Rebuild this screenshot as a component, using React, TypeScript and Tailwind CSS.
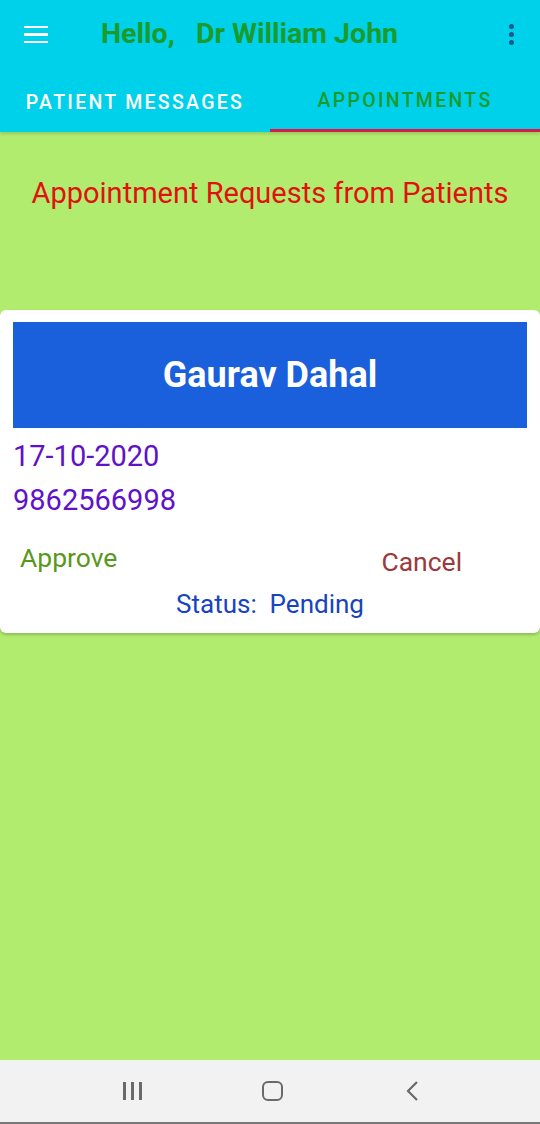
import React from "react";

export default function App() {
  return (
    <div className="w-[540px] h-[1124px] flex flex-col bg-[#b2ec6f] overflow-hidden" style={{ fontFamily: "Roboto, 'Noto Sans', sans-serif" }}>
      <div className="bg-[#00d1ea] shadow-[0_2px_3px_rgba(0,0,0,0.15)] z-10">
        <div className="h-[69px] flex items-center">
          <div className="w-[24px] ml-[24px] flex flex-col gap-[5px]">
            <div className="h-[2.5px] bg-white" />
            <div className="h-[2.5px] bg-white" />
            <div className="h-[2.5px] bg-white" />
          </div>
          <div className="ml-[53px] text-[28.5px] font-bold text-[#1a9b2b] whitespace-pre leading-none">Hello,   Dr William John</div>
          <div className="ml-auto mr-[26px] flex flex-col gap-[3px]">
            <div className="w-[5px] h-[5px] rounded-full bg-[#1d5a8a]" />
            <div className="w-[5px] h-[5px] rounded-full bg-[#1d5a8a]" />
            <div className="w-[5px] h-[5px] rounded-full bg-[#1d5a8a]" />
          </div>
        </div>
        <div className="h-[63px] flex">
          <div className="flex-1 flex items-center justify-center text-white text-[19.5px] tracking-[2.3px] font-medium pt-[4px]">PATIENT MESSAGES</div>
          <div className="flex-1 flex flex-col">
            <div className="flex-1 flex items-center justify-center text-[#1a9b2b] text-[19.5px] tracking-[2.3px] font-medium pt-[4px]">APPOINTMENTS</div>
            <div className="h-[3px] bg-[#d8194a]" />
          </div>
        </div>
      </div>
      <div className="flex-1 flex flex-col">
        <div className="text-center text-[29px] text-[#e0120f] mt-[43px] leading-[36px]">Appointment Requests from Patients</div>
        <div className="mt-[99px] bg-white rounded-[6px] shadow-[0_2px_3px_rgba(0,0,0,0.2)] pt-[12px] pb-[13px]">
          <div className="mx-[13px] h-[106px] bg-[#1a5fdc] flex items-center justify-center text-white font-bold text-[36px]">Gaurav Dahal</div>
          <div className="px-[13px] text-[29px] text-[#5f12c8] leading-[44px] mt-[6px]">
            <div>17-10-2020</div>
            <div>9862566998</div>
          </div>
          <div className="flex px-[20px] mt-[18px] text-[26.5px] leading-[36px]">
            <div className="text-[#58981c]">Approve</div>
            <div className="ml-[264px] relative top-[4px] text-[#9a3a3c]">Cancel</div>
          </div>
          <div className="text-center text-[26px] text-[#1843c0] whitespace-pre mt-[12px] leading-[32px]">Status:  Pending</div>
        </div>
        <div className="flex-1" />
      </div>
      <div className="h-[64px] bg-[#f2f2f2] border-b-[2px] border-[#777] flex items-center pl-[112px] gap-[100px]">
        <div className="w-[40px] flex justify-center gap-[5px]">
          <div className="w-[3px] h-[18px] bg-[#6a6a6a]" />
          <div className="w-[3px] h-[18px] bg-[#6a6a6a]" />
          <div className="w-[3px] h-[18px] bg-[#6a6a6a]" />
        </div>
        <div className="w-[40px] flex justify-center">
          <div className="w-[21px] h-[20px] border-[2.5px] border-[#6a6a6a] rounded-[6px]" />
        </div>
        <div className="w-[40px] flex justify-center">
          <svg width="14" height="22" viewBox="0 0 14 22"><path d="M12 2 L3 11 L12 20" stroke="#6a6a6a" strokeWidth="2.2" fill="none" /></svg>
        </div>
      </div>
    </div>
  );
}
